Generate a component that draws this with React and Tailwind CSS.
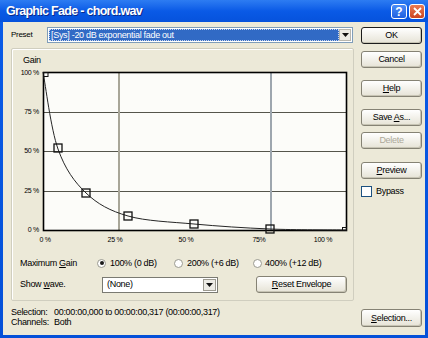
import React from "react";

const pts = [
  [43, 72],
  [58, 149],
  [86, 193],
  [128, 216],
  [194, 224],
  [270, 229],
  [346, 230],
];

function crPath(p) {
  let d = `M${p[0][0]},${p[0][1]}`;
  for (let i = 0; i < p.length - 1; i++) {
    const p0 = p[i - 1] || p[i];
    const p1 = p[i];
    const p2 = p[i + 1];
    const p3 = p[i + 2] || p[i + 1];
    const c1x = p1[0] + (p2[0] - p0[0]) / 6;
    const c1y = p1[1] + (p2[1] - p0[1]) / 6;
    const c2x = p2[0] - (p3[0] - p1[0]) / 6;
    const c2y = p2[1] - (p3[1] - p1[1]) / 6;
    d += ` C${c1x},${c1y} ${c2x},${c2y} ${p2[0]},${p2[1]}`;
  }
  return d;
}

function Btn({ children, className = "", disabled = false, def = false }) {
  return (
    <div
      className={`flex items-center justify-center rounded-[3px] border bg-gradient-to-b from-[#ffffff] to-[#e6e3d6] shadow-[inset_-1px_-1px_0_#c7c4b4] text-[9px] leading-none ${
        def ? "border-[#1c1c1c]" : "border-[#858274]"
      } ${disabled ? "text-[#aca899]" : "text-black"} ${className}`}
    >
      {children}
    </div>
  );
}

function Radio({ checked }) {
  return (
    <span className="flex h-[9px] w-[9px] shrink-0 items-center justify-center rounded-full border border-[#9a9a90] bg-white">
      {checked && <span className="h-[4px] w-[4px] rounded-full bg-[#1a1a1a]" />}
    </span>
  );
}

function Arrow() {
  return (
    <svg width="7" height="4" viewBox="0 0 7 4">
      <path d="M0 0 H7 L3.5 4 Z" fill="#111" />
    </svg>
  );
}

function Chart() {
  const squares = [
    [58, 148],
    [86, 193],
    [128, 216],
    [194, 224],
    [270, 229],
  ];
  const ylabels = [
    ["100 %", 73],
    ["75 %", 112],
    ["50 %", 151],
    ["25 %", 191],
    ["0 %", 230],
  ];
  const xlabels = [
    ["0 %", 45],
    ["25 %", 115],
    ["50 %", 186],
    ["75%", 259],
    ["100 %", 323],
  ];
  return (
    <svg width="341" height="181" viewBox="12 65 341 181" className="block">
      <rect x="43" y="72" width="304" height="159" fill="#fcfcf9" />
      {[112.5, 151.5, 191.5].map((y) => (
        <line key={y} x1="43" x2="347" y1={y} y2={y} stroke="#55554c" strokeWidth="1" />
      ))}
      <line x1="119" x2="119" y1="72" y2="231" stroke="#a8a698" strokeWidth="2" />
      <line x1="271" x2="271" y1="72" y2="231" stroke="#9da6ae" strokeWidth="2" />
      <rect x="43.5" y="72.5" width="303" height="158" fill="none" stroke="#000" strokeWidth="1.6" />
      <path d={crPath(pts)} fill="none" stroke="#262626" strokeWidth="1" />
      <rect x="43.5" y="72.5" width="4.5" height="4" fill="none" stroke="#111" strokeWidth="1" />
      {squares.map(([cx, cy]) => (
        <rect
          key={cx}
          x={cx - 4}
          y={cy - 4}
          width="8"
          height="8"
          fill="none"
          stroke="#111"
          strokeWidth="1.3"
        />
      ))}
      <rect x="342.5" y="227.5" width="4" height="3" fill="none" stroke="#111" strokeWidth="1" />
      <g fontFamily="'Liberation Sans',sans-serif" fontSize="7" letterSpacing="-0.3" fill="#000">
        {ylabels.map(([t, y]) => (
          <text key={t} x="39" y={y} textAnchor="end" dominantBaseline="middle">
            {t}
          </text>
        ))}
        {xlabels.map(([t, x]) => (
          <text key={t} x={x} y="240" textAnchor="middle" dominantBaseline="middle">
            {t}
          </text>
        ))}
      </g>
    </svg>
  );
}

export default function App() {
  return (
    <div className="flex h-[338px] w-[428px] flex-col overflow-hidden bg-gradient-to-b from-[#0b5ce8] to-[#0450d8] font-['Liberation_Sans',sans-serif] text-[9px] tracking-[-0.3px] text-black">
      {/* Title bar */}
      <div className="flex h-[22px] shrink-0 items-center bg-gradient-to-b from-[#2d7cf2] via-[#0a5ae6] to-[#0652dc] pl-[6px] pr-[3px]">
        <span className="text-[12.5px] font-bold leading-none tracking-[-0.7px] text-white [text-shadow:1px_1px_0_#0a2a8a]">
          Graphic Fade - chord.wav
        </span>
        <div className="ml-auto flex items-center gap-[2px] pt-[1px]">
          <div className="flex h-[15px] w-[16px] items-center justify-center rounded-[3px] border border-white bg-gradient-to-b from-[#4a8cf7] to-[#1f5fe0] text-[12px] font-bold leading-none tracking-normal text-white">
            ?
          </div>
          <div className="flex h-[15px] w-[16px] items-center justify-center rounded-[3px] border border-white bg-gradient-to-b from-[#ea7a52] to-[#cc4420]">
            <svg width="9" height="9" viewBox="0 0 9 9">
              <path d="M1 1 L8 8 M8 1 L1 8" stroke="#fff" strokeWidth="1.8" />
            </svg>
          </div>
        </div>
      </div>

      {/* Body */}
      <div className="mx-[3px] mb-[3px] flex flex-1 bg-[#ece9d8] pl-[8px] pt-[5px]">
        {/* Left column */}
        <div className="flex w-[343px] flex-col">
          <div className="flex h-[16px] items-center">
            <span className="w-[36px] text-[8px] leading-none">Preset</span>
            <div className="flex h-[16px] w-[306px] items-center border border-[#7f9db9] bg-white p-[1px]">
              <div className="flex h-full flex-1 items-center bg-[#316ac5] pl-[2px] leading-none text-white outline-1 outline-dotted outline-[#c8d6ee] -outline-offset-1">
                [Sys] -20 dB exponential fade out
              </div>
              <div className="flex h-full w-[12px] items-center justify-center border border-[#b8b6ad] bg-[#ecebe5]">
                <Arrow />
              </div>
            </div>
          </div>

          {/* Group box */}
          <div className="mt-[5px] flex h-[253px] w-[343px] flex-col rounded-[2px] border border-[#d0cebf] shadow-[inset_1px_1px_0_#ffffff]">
            <div className="pl-[11px] pt-[6px] leading-[10px]">Gain</div>
            <Chart />
            <div className="mt-[10px] flex h-[14px] items-center pl-[8px] leading-none">
              <span className="w-[77px]">
                Maximum <span className="underline">G</span>ain
              </span>
              <div className="flex w-[77px] items-center">
                <Radio checked />
                <span className="ml-[4px]">100% (0 dB)</span>
              </div>
              <div className="flex w-[79px] items-center">
                <Radio />
                <span className="ml-[4px]">200% (+6 dB)</span>
              </div>
              <div className="flex items-center">
                <Radio />
                <span className="ml-[3px]">400% (+12 dB)</span>
              </div>
            </div>
            <div className="mt-[6px] flex h-[17px] items-center pl-[8px] leading-none">
              <span className="w-[82px]">
                Show <span className="underline">w</span>ave.
              </span>
              <div className="flex h-[16px] w-[116px] items-center border border-[#7a7a72] bg-white p-[1px]">
                <span className="flex-1 pl-[3px]">(None)</span>
                <div className="flex h-full w-[13px] items-center justify-center border border-[#9c9a90] bg-[#ecebe5]">
                  <Arrow />
                </div>
              </div>
              <Btn className="ml-[38px] h-[17px] w-[91px]">
                <span>
                  <span className="underline">R</span>eset Envelope
                </span>
              </Btn>
            </div>
          </div>

          {/* Selection info */}
          <div className="mt-[6px] grid grid-cols-[43px_1fr] leading-[10px]">
            <span>Selection:</span>
            <span>00:00:00,000 to 00:00:00,317 (00:00:00,317)</span>
            <span>Channels:</span>
            <span>Both</span>
          </div>
        </div>

        {/* Right column */}
        <div className="ml-[7px] flex w-[61px] flex-col">
          <Btn def className="h-[17px]">
            OK
          </Btn>
          <Btn className="mt-[7px] h-[17px]">Cancel</Btn>
          <Btn className="mt-[12px] h-[17px]">
            <span>
              <span className="underline">H</span>elp
            </span>
          </Btn>
          <Btn className="mt-[12px] h-[17px]">
            <span>
              Save <span className="underline">A</span>s...
            </span>
          </Btn>
          <Btn disabled className="mt-[6px] h-[17px]">
            Delete
          </Btn>
          <Btn className="mt-[13px] h-[17px]">
            <span>
              <span className="underline">P</span>review
            </span>
          </Btn>
          <div className="mt-[6px] flex h-[12px] items-center leading-none">
            <span className="h-[11px] w-[11px] border border-[#1c5180] bg-white" />
            <span className="ml-[4px]">Bypass</span>
          </div>
          <Btn className="mb-[8px] mt-auto h-[18px]">
            <span>
              <span className="underline">S</span>election...
            </span>
          </Btn>
        </div>
      </div>
    </div>
  );
}
